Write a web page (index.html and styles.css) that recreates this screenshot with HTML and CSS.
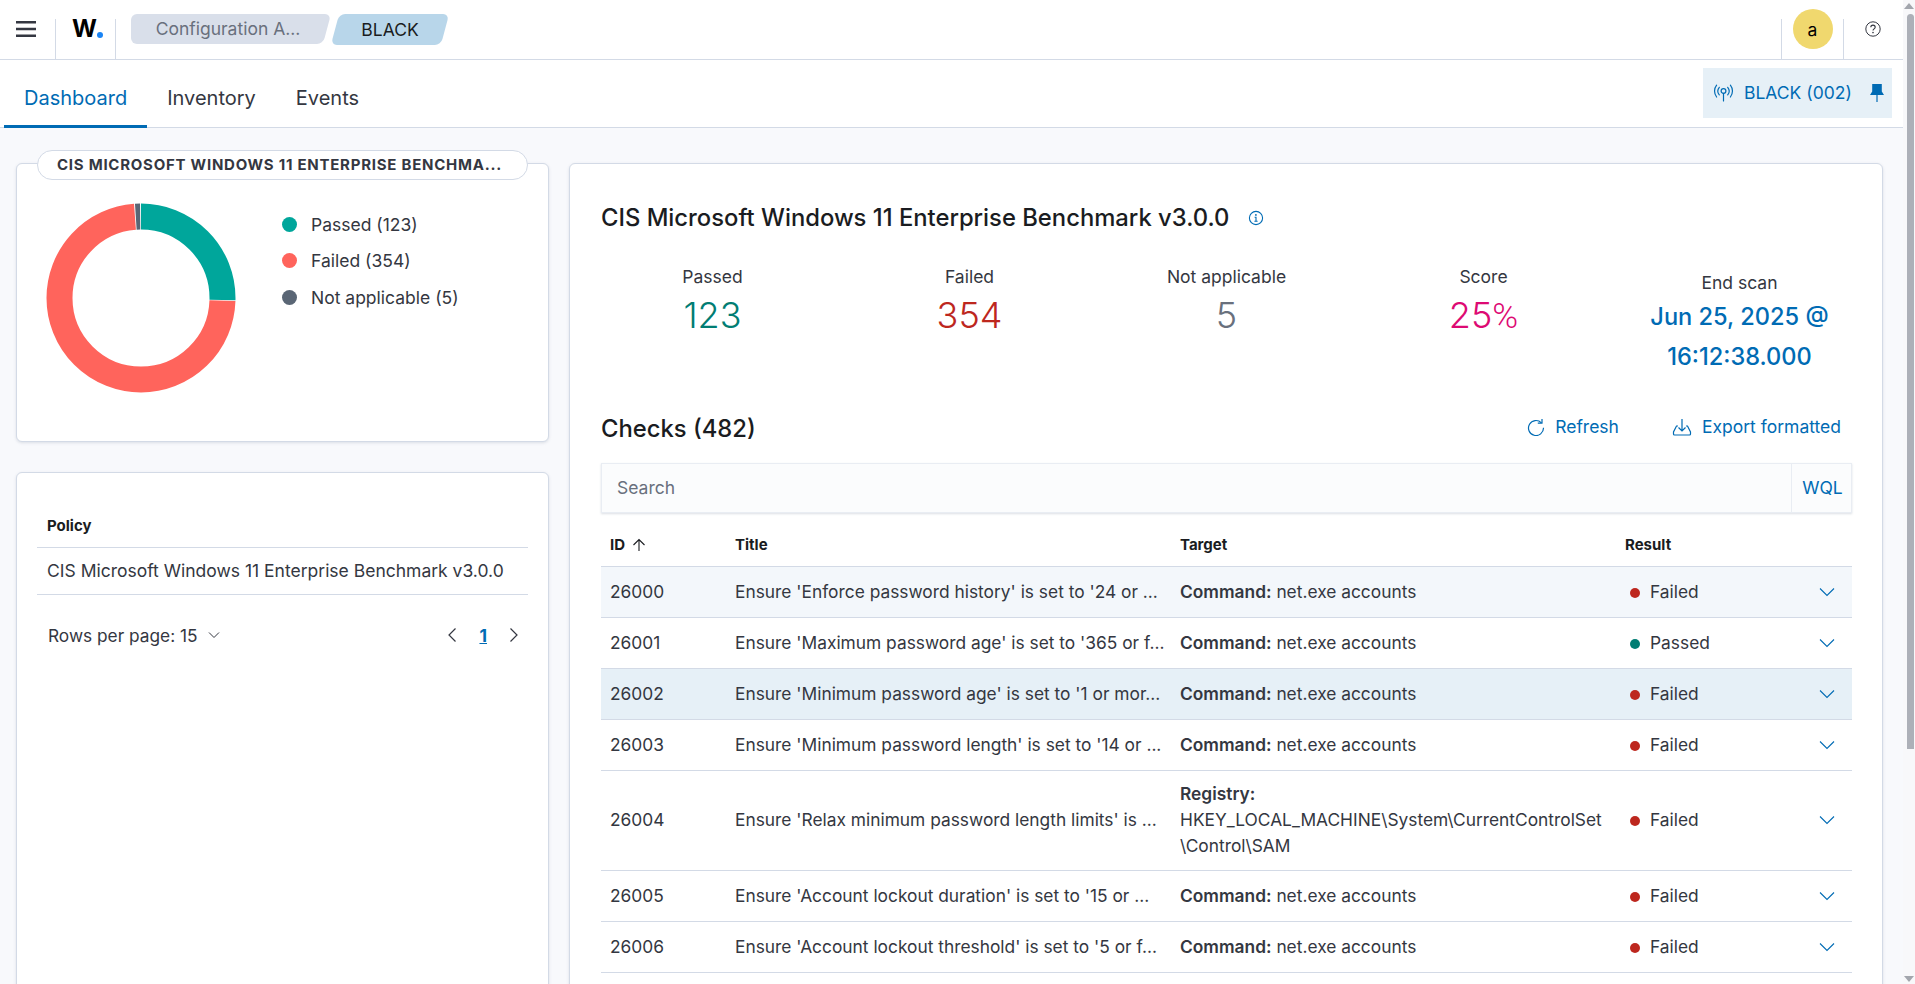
FILE: index.html
```html
<!DOCTYPE html>
<html lang="en">
<head>
<meta charset="utf-8">
<title>Configuration Assessment</title>
<link rel="stylesheet" href="styles.css">
</head>
<body>
<div class="page">
  <header class="topbar">
    <button class="menu-btn" aria-label="Menu">
      <svg width="20" height="16" viewBox="0 0 20 16"><path d="M0 1.25h20M0 8h20M0 14.75h20" stroke="#343741" stroke-width="2.4"/></svg>
    </button>
    <div class="logo"><span class="logo-w">W</span><span class="logo-dot"></span></div>
    <nav class="crumbs">
      <span class="crumb crumb-first">Configuration A...</span>
      <span class="crumb crumb-second">BLACK</span>
    </nav>
    <div class="top-right">
      <div class="avatar-cell"><span class="avatar">a</span></div>
      <div class="help-cell">
        <svg width="16" height="16" viewBox="0 0 16 16" fill="none" stroke="#343741"><circle cx="8" cy="8" r="7.2"/><path d="M5.8 6.3c0-1.3 1-2.2 2.2-2.2s2.2.9 2.2 2.1c0 1.7-2.2 1.7-2.2 3.4" stroke-width="1.1"/><circle cx="8" cy="11.6" r=".8" fill="#343741" stroke="none"/></svg>
      </div>
    </div>
  </header>

  <div class="subnav">
    <div class="tabs">
      <a class="tab tab-active">Dashboard</a>
      <a class="tab">Inventory</a>
      <a class="tab">Events</a>
    </div>
    <div class="agent-btn">
      <svg class="agent-icon" width="21" height="20" viewBox="0 0 21 20" fill="none" stroke="#006bb4" stroke-width="1.2" stroke-linecap="round"><circle cx="10.5" cy="8" r="2.4"/><path d="M10.5 10.4V18M6.3 4.3a6 6 0 0 0 0 7.6M14.7 4.3a6 6 0 0 1 0 7.6M3.6 2.2a9.5 9.5 0 0 0 0 11.8M17.4 2.2a9.5 9.5 0 0 1 0 11.8"/></svg>
      <span class="agent-name">BLACK (002)</span>
      <svg class="agent-pin" width="16" height="20" viewBox="0 0 16 20"><path d="M3.2 1h9.6v7.5L15 12H1l2.2-3.5z" fill="#006bb4"/><path d="M8 12v7" stroke="#006bb4" stroke-width="1.2"/></svg>
    </div>
  </div>

  <main class="content">
    <div class="left-col">
      <section class="card chart-card">
        <div class="pill">CIS MICROSOFT WINDOWS 11 ENTERPRISE BENCHMA...</div>
        <div class="chart-body">
          <svg class="donut" width="190" height="190" viewBox="0 0 190 190" fill="none" stroke-width="26">
            <g transform="rotate(-90 95 95)">
              <circle cx="95" cy="95" r="81.5" stroke="#00a69b" pathLength="482" stroke-dasharray="122.4 359.6"/>
              <circle cx="95" cy="95" r="81.5" stroke="#ff645c" pathLength="482" stroke-dasharray="353.2 128.8" stroke-dashoffset="-123"/>
              <circle cx="95" cy="95" r="81.5" stroke="#5a6675" pathLength="482" stroke-dasharray="4.2 477.8" stroke-dashoffset="-477"/>
            </g>
          </svg>
          <ul class="legend">
            <li class="legend-item"><span class="swatch swatch-pass"></span>Passed (123)</li>
            <li class="legend-item"><span class="swatch swatch-fail"></span>Failed (354)</li>
            <li class="legend-item"><span class="swatch swatch-na"></span>Not applicable (5)</li>
          </ul>
        </div>
      </section>

      <section class="card policy-card">
        <div class="policy-head">Policy</div>
        <div class="policy-row">CIS Microsoft Windows 11 Enterprise Benchmark v3.0.0</div>
        <div class="pager">
          <div class="rows-per-page">Rows per page: 15
            <svg width="12" height="8" viewBox="0 0 12 8" fill="none" stroke="#343741"><path d="M1 1.5l5 5 5-5"/></svg>
          </div>
          <div class="pages">
            <svg width="10" height="16" viewBox="0 0 10 16" fill="none" stroke="#343741" stroke-width="1.2"><path d="M8.5 1.5L2 8l6.5 6.5"/></svg>
            <span class="page-num">1</span>
            <svg width="10" height="16" viewBox="0 0 10 16" fill="none" stroke="#343741" stroke-width="1.2"><path d="M1.5 1.5L8 8l-6.5 6.5"/></svg>
          </div>
        </div>
      </section>
    </div>

    <section class="card detail-card">
      <div class="detail-title">
        <h2 class="h-title">CIS Microsoft Windows 11 Enterprise Benchmark v3.0.0</h2>
        <svg width="16" height="16" viewBox="0 0 16 16" fill="none" stroke="#006bb4"><circle cx="8" cy="8" r="6.6" stroke-width="1.1"/><path d="M6.6 7.2H8v4M6.4 11.2h3.2" stroke-width="1.1"/><circle cx="7.9" cy="4.9" r=".9" fill="#006bb4" stroke="none"/></svg>
      </div>

      <div class="stats">
        <div class="stat"><div class="stat-label">Passed</div><div class="stat-value v-pass">123</div></div>
        <div class="stat"><div class="stat-label">Failed</div><div class="stat-value v-fail">354</div></div>
        <div class="stat"><div class="stat-label">Not applicable</div><div class="stat-value v-na">5</div></div>
        <div class="stat"><div class="stat-label">Score</div><div class="stat-value v-score">25<span class="pct">%</span></div></div>
        <div class="stat stat-end"><div class="stat-label">End scan</div><div class="stat-date">Jun 25, 2025 @ 16:12:38.000</div></div>
      </div>

      <div class="checks-head">
        <h2 class="h-title">Checks (482)</h2>
        <div class="actions">
          <a class="action">
            <svg width="18" height="18" viewBox="0 0 18 18" fill="none" stroke="#006bb4" stroke-width="1.2"><path d="M14.4 4.8A7.5 7.5 0 1 0 16.5 9.8"/><path d="M15 1v4.2h-4.2" stroke-linejoin="round"/></svg>
            Refresh</a>
          <a class="action">
            <svg width="20" height="18" viewBox="0 0 20 18" fill="none" stroke="#006bb4" stroke-width="1.2"><path d="M6 8H4.5L1.5 14v2a1 1 0 0 0 1 1h15a1 1 0 0 0 1-1v-2l-3-6H14"/><path d="M10 1v12M6.5 9.5L10 13l3.5-3.5"/></svg>
            Export formatted</a>
        </div>
      </div>

      <div class="search">
        <span class="search-input">Search</span>
        <span class="search-wql">WQL</span>
      </div>

      <table class="checks">
        <colgroup><col class="c-id"><col class="c-title"><col class="c-target"><col class="c-result"><col class="c-exp"></colgroup>
        <thead>
          <tr>
            <th class="th-id">ID <svg class="sort" width="14" height="14" viewBox="0 0 14 14" fill="none" stroke="#1a1c21" stroke-width="1.1"><path d="M7 13V1.5M1.5 7L7 1.5 12.5 7"/></svg></th>
            <th>Title</th><th>Target</th><th class="th-result">Result</th><th></th>
          </tr>
        </thead>
        <tbody>
          <tr class="row-hover"><td class="t-id">26000</td><td class="t-title">Ensure 'Enforce password history' is set to '24 or ...</td><td><b>Command:</b> net.exe accounts</td><td><span class="dot dot-fail"></span>Failed</td><td class="t-exp"><svg width="16" height="10" viewBox="0 0 16 10" fill="none" stroke="#006bb4" stroke-width="1.1"><path d="M1 1.5l7 7 7-7"/></svg></td></tr>
          <tr><td class="t-id">26001</td><td class="t-title">Ensure 'Maximum password age' is set to '365 or f...</td><td><b>Command:</b> net.exe accounts</td><td><span class="dot dot-pass"></span>Passed</td><td class="t-exp"><svg width="16" height="10" viewBox="0 0 16 10" fill="none" stroke="#006bb4" stroke-width="1.1"><path d="M1 1.5l7 7 7-7"/></svg></td></tr>
          <tr class="row-selected"><td class="t-id">26002</td><td class="t-title">Ensure 'Minimum password age' is set to '1 or mor...</td><td><b>Command:</b> net.exe accounts</td><td><span class="dot dot-fail"></span>Failed</td><td class="t-exp"><svg width="16" height="10" viewBox="0 0 16 10" fill="none" stroke="#006bb4" stroke-width="1.1"><path d="M1 1.5l7 7 7-7"/></svg></td></tr>
          <tr><td class="t-id">26003</td><td class="t-title">Ensure 'Minimum password length' is set to '14 or ...</td><td><b>Command:</b> net.exe accounts</td><td><span class="dot dot-fail"></span>Failed</td><td class="t-exp"><svg width="16" height="10" viewBox="0 0 16 10" fill="none" stroke="#006bb4" stroke-width="1.1"><path d="M1 1.5l7 7 7-7"/></svg></td></tr>
          <tr class="row-tall"><td class="t-id">26004</td><td class="t-title">Ensure 'Relax minimum password length limits' is ...</td><td><b>Registry:</b><br>HKEY_LOCAL_MACHINE\System\CurrentControlSet<br>\Control\SAM</td><td><span class="dot dot-fail"></span>Failed</td><td class="t-exp"><svg width="16" height="10" viewBox="0 0 16 10" fill="none" stroke="#006bb4" stroke-width="1.1"><path d="M1 1.5l7 7 7-7"/></svg></td></tr>
          <tr><td class="t-id">26005</td><td class="t-title">Ensure 'Account lockout duration' is set to '15 or ...</td><td><b>Command:</b> net.exe accounts</td><td><span class="dot dot-fail"></span>Failed</td><td class="t-exp"><svg width="16" height="10" viewBox="0 0 16 10" fill="none" stroke="#006bb4" stroke-width="1.1"><path d="M1 1.5l7 7 7-7"/></svg></td></tr>
          <tr><td class="t-id">26006</td><td class="t-title">Ensure 'Account lockout threshold' is set to '5 or f...</td><td><b>Command:</b> net.exe accounts</td><td><span class="dot dot-fail"></span>Failed</td><td class="t-exp"><svg width="16" height="10" viewBox="0 0 16 10" fill="none" stroke="#006bb4" stroke-width="1.1"><path d="M1 1.5l7 7 7-7"/></svg></td></tr>
        </tbody>
      </table>
    </section>
  </main>
</div>
<div class="scrollbar" aria-hidden="true">
  <span class="sb-arrow sb-up"></span>
  <span class="sb-thumb"></span>
  <span class="sb-arrow sb-down"></span>
</div>
</body>
</html>
```

FILE: styles.css
```css
* { box-sizing: border-box; }
html, body { margin: 0; height: 100%; }
body {
  display: flex;
  height: 100vh;
  overflow: hidden;
  background: #f8f9fc;
  color: #343741;
  font-family: Inter, "Noto Sans", sans-serif;
  font-size: 17.5px;
}
.page { flex: 1; min-width: 0; height: 100%; overflow: hidden; display: flex; flex-direction: column; }

/* fake browser scrollbar */
.scrollbar { width: 12px; flex: none; display: flex; flex-direction: column; align-items: center; background: #f8f8fa; padding: 3px 0 2px; }
.sb-arrow { width: 0; height: 0; border-left: 5px solid transparent; border-right: 5px solid transparent; flex: none; }
.sb-up { border-bottom: 6px solid #a3a6ad; }
.sb-down { border-top: 6px solid #a3a6ad; margin-top: auto; }
.sb-thumb { width: 7px; height: 735px; margin-top: 5px; margin-left: 2px; background: #adb0b8; border-radius: 4px 4px 0 0; }

/* top bar */
.topbar { height: 60px; flex: none; display: flex; align-items: stretch; background: #fff; border-bottom: 1px solid #d3dae6; }
.menu-btn { width: 55px; padding: 0 0 0 16px; margin: 0; border: 0; background: none; display: flex; align-items: flex-start; }
.menu-btn svg { margin-top: 21px; }
.logo { width: 61px; margin-top: 19px; border-left: 1px solid #d3dae6; border-right: 1px solid #d3dae6; display: flex; align-items: flex-start; padding: 0 0 0 16px; }
.logo-w { font-size: 24px; font-weight: 700; line-height: 24px; color: #000; margin-top: -2px; }
.logo-dot { width: 6px; height: 6px; border-radius: 50%; background: #1a84f5; margin: 13px 0 0 0; }
.crumbs { display: flex; align-items: flex-start; padding: 14px 0 0 15px; gap: 8px; }
.crumb { position: relative; height: 30px; line-height: 30px; text-align: center; z-index: 0; }
.crumb::before { content: ""; position: absolute; inset: 0; z-index: -1; border-radius: 6px; transform: skewX(-15deg); }
.crumb-first { width: 196px; color: #69707d; padding-right: 2px; }
.crumb-first::before { left: 8px; background: #d9dfea; }
.crumb-first::after { content: ""; position: absolute; left: 0; top: 0; bottom: 0; width: 30px; background: #d9dfea; border-radius: 6px 0 0 6px; z-index: -1; }
.crumb-second { width: 110px; height: 31px; line-height: 31px; color: #1a1c21; }
.crumb-second::before { background: #b8d6ea; }
.top-right { margin-left: auto; display: flex; align-items: stretch; }
.avatar-cell { width: 63px; margin-top: 19px; border-left: 1px solid #d3dae6; border-right: 1px solid #d3dae6; display: flex; justify-content: center; }
.avatar { width: 40px; height: 40px; margin-top: -10px; border-radius: 50%; background: #f0d86e; color: #000; display: flex; align-items: center; justify-content: center; }
.help-cell { width: 59px; display: flex; justify-content: center; padding: 21px 1px 0 0; }

/* sub nav */
.subnav { height: 68px; flex: none; display: flex; justify-content: space-between; background: #fff; border-bottom: 1px solid #d3dae6; padding: 0 11px 0 4px; }
.tabs { display: flex; align-items: stretch; margin-bottom: -1px; }
.tab { padding: 25px 20px 0; font-size: 20px; line-height: 26px; color: #343741; border-bottom: 2px solid transparent; }
.tab-active { color: #006bb4; border-bottom-color: #006bb4; border-bottom-width: 3px; }
.agent-btn { width: 189px; height: 50px; margin-top: 8px; background: #e6f0f7; color: #006bb4; display: flex; align-items: center; padding: 0 7px 0 10px; }
.agent-icon { flex: none; }
.agent-name { margin-left: 10px; white-space: nowrap; line-height: 24px; margin-bottom: 1px; }
.agent-pin { margin-left: auto; flex: none; }

/* grid */
.content { flex: 1; min-height: 0; display: grid; grid-template-columns: 533px 1314px; column-gap: 20px; padding: 35px 0 0 16px; align-items: start; }
.left-col { display: flex; flex-direction: column; gap: 30px; }
.card { background: #fff; border: 1px solid #d3dae6; border-radius: 6px; box-shadow: 0 1px 3px rgba(152, 162, 179, .3); }

.chart-card { position: relative; height: 279px; }
.pill { position: absolute; left: 20px; right: 20px; top: -14px; height: 30px; padding: 0 18px 0 19px; background: #fff; border: 1px solid #d3dae6; border-radius: 15px; font-size: 15px; line-height: 28px; font-weight: 700; letter-spacing: .75px; color: #343741; white-space: nowrap; }
.chart-body { display: flex; padding: 39px 0 0 29px; align-items: flex-start; }
.donut { flex: none; }
.legend { list-style: none; margin: 0; padding: 3px 0 0 46px; }
.legend-item { display: flex; align-items: center; height: 36.5px; white-space: nowrap; }
.swatch { width: 15px; height: 15px; border-radius: 50%; margin-right: 14px; flex: none; }
.swatch-pass { background: #00a69b; }
.swatch-fail { background: #ff645c; }
.swatch-na { background: #5a6675; }

.policy-card { height: 560px; padding: 20px 20px 0; }
.policy-head { height: 55px; padding: 23px 10px 0; font-size: 15px; line-height: 20px; font-weight: 700; color: #1a1c21; border-bottom: 1px solid #d3dae6; }
.policy-row { height: 47px; padding: 0 10px; line-height: 46px; border-bottom: 1px solid #d3dae6; white-space: nowrap; }
.pager { display: flex; justify-content: space-between; align-items: center; height: 40px; margin-top: 20px; padding: 0 9px 0 11px; }
.rows-per-page { display: flex; align-items: center; gap: 10px; font-size: 17.3px; }
.pages { display: flex; align-items: center; gap: 22px; }
.page-num { font-weight: 700; color: #006bb4; text-decoration: underline; }

/* right card */
.detail-card { height: 900px; padding: 0 30px 0 31px; }
.detail-title { display: flex; align-items: center; gap: 19px; height: 36px; margin-top: 36px; }
.h-title { margin: 0; font-size: 23.8px; line-height: 36px; font-weight: 500; color: #1a1c21; }
.stats { display: grid; grid-template-columns: repeat(5, 257px); margin: 0 -17px; padding-top: 29px; height: 173px; }
.stat { text-align: center; }
.stat-label { line-height: 24px; color: #343741; }
.stat-value { font-size: 36px; line-height: 48px; font-weight: 300; margin-top: 2px; }
.stat-end { padding-top: 6px; margin-left: -2px; }
.stat-date { margin: 2px auto 0; width: 200px; font-size: 23.6px; line-height: 40px; font-weight: 500; color: #006bb4; }
.pct { font-family: Roboto, sans-serif; font-size: 35px; }
.v-pass { color: #017d73; }
.v-fail { color: #bd271e; }
.v-na { color: #69707d; }
.v-score { color: #dd0a73; }

.checks-head { display: flex; justify-content: space-between; align-items: center; height: 40px; padding-right: 11px; }
.actions { display: flex; gap: 53px; padding-bottom: 5px; }
.action { display: flex; align-items: center; gap: 10px; color: #006bb4; white-space: nowrap; }
.search { display: flex; height: 50px; margin-top: 14px; background: #fbfcfd; border: 1px solid #e9edf3; box-shadow: 0 1px 2px rgba(152, 162, 179, .35); }
.search-input { flex: 1; padding-left: 15px; line-height: 48px; color: #69707d; }
.search-wql { width: 60px; padding-left: 2px; border-left: 1px solid #e9edf3; line-height: 48px; text-align: center; color: #006bb4; }

.checks { width: 100%; table-layout: fixed; border-collapse: collapse; font-size: 17.35px; }
.c-id { width: 124px; }
.c-title { width: 445px; }
.c-target { width: 444px; }
.c-result { width: 178px; }
th { height: 53px; padding: 10px 10px 0; text-align: left; font-size: 15px; font-weight: 700; color: #1a1c21; border-bottom: 1px solid #d3dae6; }
th.th-id { padding-left: 9px; }
.th-result { padding-left: 11px; }
.sort { margin-left: 3px; vertical-align: -2px; }
td { height: 51px; padding: 11px 10px; border-bottom: 1px solid #d3dae6; line-height: 26px; }
td.t-id { padding-left: 9px; }
td b { font-weight: 600; }
td.t-title { padding-right: 0; white-space: nowrap; }
.row-hover td { background: #f3f7fb; }
.row-selected td { background: #e6f0f7; }
.row-tall td { padding-top: 10.5px; padding-bottom: 10.5px; }
td.t-exp { text-align: right; padding: 0 17px 2px 0; }
.dot { display: inline-block; width: 10px; height: 10px; border-radius: 50%; margin: 0 10px 0 6px; }
.dot-fail { background: #bd271e; }
.dot-pass { background: #017d73; }
```
